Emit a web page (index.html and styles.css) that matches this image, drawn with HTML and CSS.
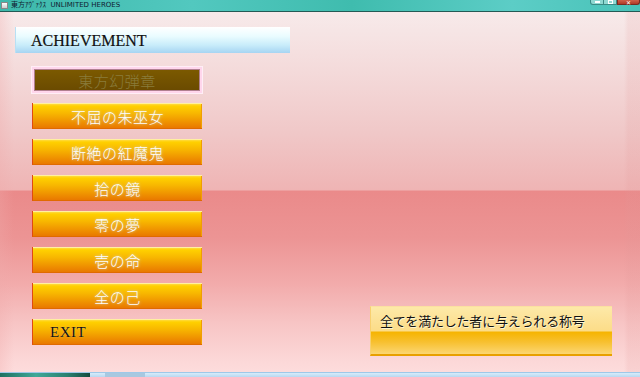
FILE: index.html
```html
<!DOCTYPE html>
<html lang="ja">
<head>
<meta charset="utf-8">
<title>東方 UNLIMITED HEROES</title>
<link rel="stylesheet" href="styles.css">
</head>
<body>
<div class="window">
  <div class="titlebar">
    <span class="appicon"></span>
    <span class="title">東方ｱｳﾞｧｸｽ  UNLIMITED HEROES</span>
    <div class="winbtns">
      <span class="wb min"><i></i></span>
      <span class="wb max"><i></i></span>
      <span class="wb close">✕</span>
    </div>
  </div>
  <div class="client">
    <div class="header">ACHIEVEMENT</div>
    <div class="row">
      <nav class="menu">
        <div class="btn selected"><span>東方幻弾章</span></div>
        <div class="btn"><span>不屈の朱巫女</span></div>
        <div class="btn"><span>断絶の紅魔鬼</span></div>
        <div class="btn"><span>拾の鏡</span></div>
        <div class="btn"><span>零の夢</span></div>
        <div class="btn"><span>壱の命</span></div>
        <div class="btn"><span>全の己</span></div>
        <div class="btn exit"><span>EXIT</span></div>
      </nav>
      <aside class="desc">
        <div class="desc-text">全てを満たした者に与えられる称号</div>
      </aside>
    </div>
  </div>
  <div class="taskbar"><span class="tb-green"></span><span class="tb-item"></span></div>
</div>
</body>
</html>
```
FILE: styles.css
```css
* { box-sizing: border-box; }
html, body { margin: 0; padding: 0; }
body { width: 640px; height: 377px; overflow: hidden; background: #f6e6e6; }

.window { width: 640px; height: 377px; display: flex; flex-direction: column; }

.titlebar {
  height: 12px;
  flex: none;
  display: flex;
  align-items: center;
  background: linear-gradient(90deg, #3db8aa 0%, #52c8bf 30%, #3fbcae 55%, #5ccdc6 80%, #48c2b8 100%);
  border-bottom: 1px solid #245a55;
  position: relative;
}
.appicon { width: 7px; height: 7px; margin-left: 1px; background: linear-gradient(#fff, #ccc); border: 1px solid #888; }
.title { font-family: "DejaVu Sans", "Noto Sans CJK JP", sans-serif; font-size: 7px; color: #102030; margin-left: 3px; line-height: 11px; white-space: pre; }
.winbtns { margin-left: auto; display: flex; height: 6px; align-self: flex-start; }
.wb { display: flex; align-items: center; justify-content: center; height: 5px; border: 1px solid #3a8a84; border-top: none; }
.wb.min { width: 14px; background: #8fd8d2; border-radius: 0 0 0 3px; }
.wb.min i { display: block; width: 5px; height: 2px; background: #fff; }
.wb.max { width: 13px; background: #8fd8d2; border-left: none; }
.wb.max i { display: block; width: 5px; height: 4px; border: 1px solid #fff; }
.wb.close { width: 23px; background: linear-gradient(#d0604a, #b03a28); color: #fff; font-size: 6px; line-height: 5px; border-color: #7a2a20; border-radius: 0 0 3px 0; font-family: "DejaVu Sans", sans-serif; }

.client {
  flex: 1;
  position: relative;
  background:
    linear-gradient(90deg, rgba(240,170,170,0.3) 0px, rgba(240,170,170,0) 14px, rgba(240,170,170,0) 624px, rgba(225,150,150,0.15) 628px, rgba(225,150,150,0.15) 640px),
    linear-gradient(180deg, #f7eaea 0px, #f4dada 60px, #f0c8c8 120px, #efb4b4 178px, #ea8a8a 179px, #ec9494 225px, #f2aaaa 270px, #f7c4c4 310px, #fcd8d8 350px, #fddcdc 360px);
  padding-top: 15px;
  padding-left: 15px;
}

.header {
  width: 275px;
  height: 26px;
  background: linear-gradient(180deg, #ffffff 0%, #eafcff 35%, #c8ecfa 70%, #a6d4f2 100%);
  border-left: 1px solid #b8e0f4;
  font-family: "Liberation Serif", "DejaVu Serif", serif;
  font-size: 16px;
  color: #111;
  padding-left: 15px;
  line-height: 27px;
  -webkit-text-stroke: 0.2px #111;
}

.row { display: flex; align-items: flex-start; }

.menu {
  margin-left: 17px;
  margin-top: 14px;
  display: flex;
  flex-direction: column;
  gap: 10px;
}

.btn {
  width: 170px;
  height: 26px;
  display: flex;
  align-items: center;
  justify-content: center;
  background: linear-gradient(180deg, #ffe060 0px, #ffd000 3px, #f8b800 10px, #f09600 18px, #e87400 26px);
  border-left: 1px solid #e04a10;
  border-bottom: 1px solid #e06a00;
  box-shadow: inset 0 1px 0 #fff0a0, inset -1px 0 0 #f0a000;
  font-family: "Noto Sans CJK JP", sans-serif;
  font-weight: 300;
  font-size: 15px;
  color: #fdfdff;
  text-shadow: 0 0 3px rgba(200,225,255,0.8);
  padding-top: 1px;
}
.btn span { letter-spacing: 0.5px; }

.btn.selected {
  background: linear-gradient(180deg, #7c5a00, #6a4a00);
  border: 2px solid #ffd6ec;
  box-shadow: 0 0 0 1px #ffeef6, inset 0 0 0 1px #b08090;
  color: #8a7c3c;
  text-shadow: none;
  height: 26px;
}

.btn.exit {
  justify-content: flex-start;
  padding-left: 17px;
  color: #111;
  text-shadow: 0 0 1px #ffd060;
  font-family: "Liberation Serif", serif;
  font-weight: 400;
  font-size: 15px;
}

.desc {
  margin-left: auto;
  margin-right: 28px;
  margin-top: 253px;
  width: 242px;
  height: 50px;
  background: linear-gradient(180deg, #fde9a8 0px, #fcdc88 24px, #f6b400 25px, #f7c030 35px, #fcd878 48px);
  border-bottom: 2px solid #e8a000;
  border-left: 1px solid #f8d070;
  border-top: 1px solid #fbe0a0;
  padding-left: 9px;
}
.desc-text {
  font-family: "Noto Sans CJK JP", sans-serif;
  font-size: 13px;
  line-height: 28px;
  color: #111;
  text-shadow: 1px 1px 0 #fff4d0;
  letter-spacing: -0.2px;
}

.taskbar {
  height: 5px;
  flex: none;
  display: flex;
  background: linear-gradient(180deg, #d8ecfa, #b8d8f0);
  border-top: 1px solid #9ec8e8;
}
.tb-green { width: 90px; background: linear-gradient(90deg, #1e7060, #40a898 40%, #2a8070 75%, #154a3e); }
.tb-item { width: 40px; margin-left: 15px; background: #a8c8e0; }
```
